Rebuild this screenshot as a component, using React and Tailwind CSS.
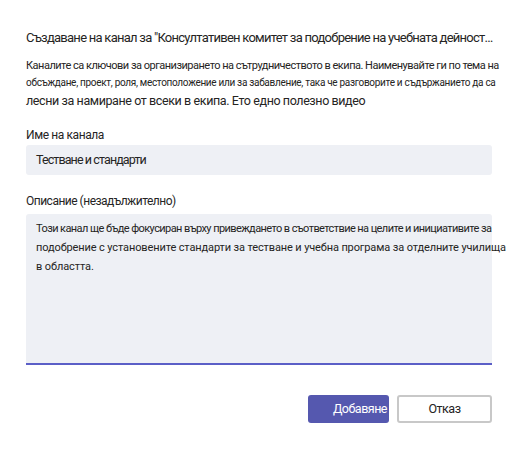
export default function App() {
  return (
    <div className="w-[520px] h-[449px] bg-white text-[#252423] px-[26px] pt-[29px]" style={{ fontFamily: 'Roboto, "Liberation Sans", Arial, sans-serif' }}>
      <h1 className="text-[13px] leading-[18px] tracking-[-0.74px] whitespace-nowrap">
        Създаване на канал за "Консултативен комитет за подобрение на учебната дейност…
      </h1>
      <div className="mt-[10px] w-[470px]">
        <p className="text-[11px] leading-[17px] tracking-[-0.5px] whitespace-nowrap">Каналите са ключови за организирането на сътрудничеството в екипа. Наименувайте ги по тема на</p>
        <p className="text-[10px] leading-[17px] tracking-[-0.3px] whitespace-nowrap">обсъждане, проект, роля, местоположение или за забавление, така че разговорите и съдържанието да са</p>
        <p className="text-[12.5px] leading-[19px] tracking-[-0.4px] whitespace-nowrap">лесни за намиране от всеки в екипа. Ето едно полезно видео</p>
      </div>
      <label className="block mt-[17px] text-[12px] leading-[16px] tracking-[-0.4px]">Име на канала</label>
      <div className="mt-[2px] w-[466px] h-[30px] bg-[#eef0f5] rounded-[3px] flex items-center px-[10px] text-[12.5px] tracking-[-0.9px]">
        Тестване и стандарти
      </div>
      <label className="block mt-[18px] text-[12px] leading-[16px] tracking-[-0.5px]">Описание (незадължително)</label>
      <div className="mt-[5px] w-[466px] h-[151px] bg-[#eef0f5] rounded-t-[3px] border-b-2 border-[#5b5fc7] px-[10px] pt-[5px] text-[11px] leading-[19px] whitespace-nowrap">
        <div className="tracking-[-0.58px]">Този канал ще бъде фокусиран върху привеждането в съответствие на целите и инициативите за</div>
        <div className="tracking-[-0.12px]">подобрение с установените стандарти за тестване и учебна програма за отделните училища</div>
        <div className="tracking-[-0.1px]">в областта.</div>
      </div>
      <div className="mt-[30px] flex justify-end gap-[8px] w-[466px]">
        <button className="w-[81px] h-[28px] bg-[#5558af] text-white rounded-[3px] text-[12.5px] tracking-[-0.5px] flex items-center justify-end pr-[2px]">Добавяне</button>
        <button className="w-[95px] h-[28px] bg-white border-2 border-[#c8c8c8] rounded-[3px] text-[12.5px] tracking-[-0.5px]">Отказ</button>
      </div>
    </div>
  );
}
